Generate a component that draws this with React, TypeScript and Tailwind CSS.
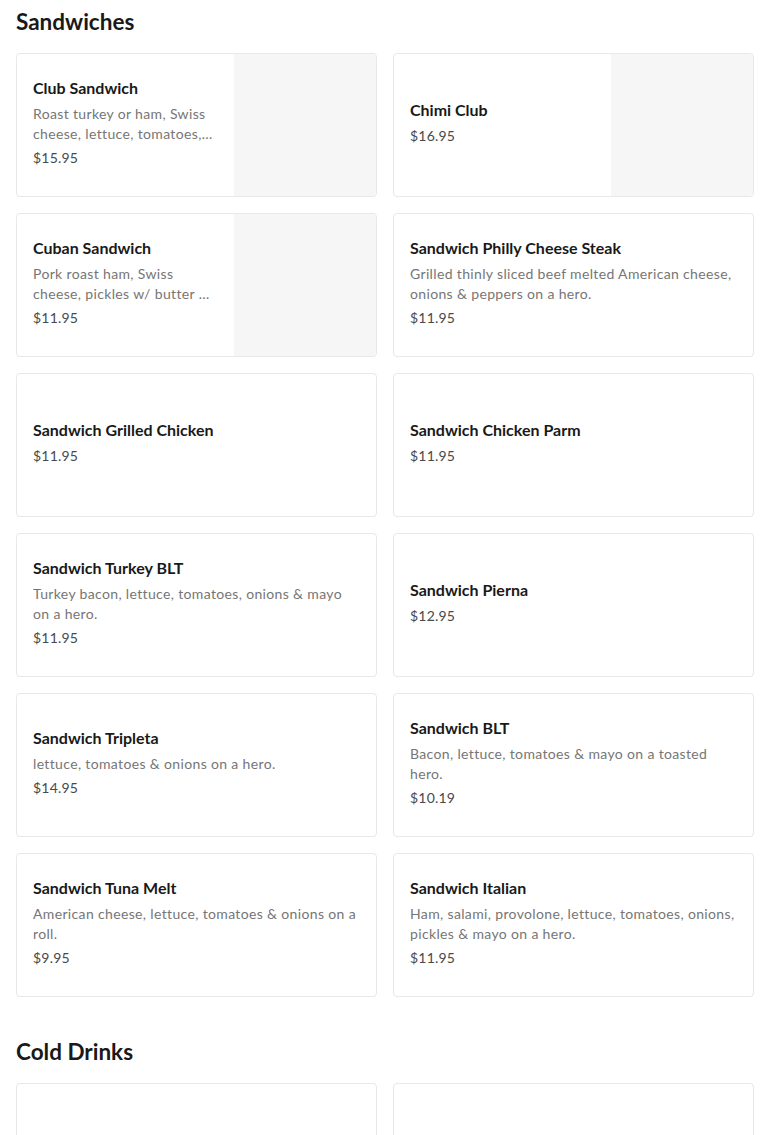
import React from "react";

type Item = { name: string; desc?: string; price: string; image?: boolean };

const sandwiches: Item[] = [
  {
    name: "Club Sandwich",
    desc: "Roast turkey or ham, Swiss cheese, lettuce, tomatoes, bacon & mayo on toasted bread.",
    price: "$15.95",
    image: true,
  },
  { name: "Chimi Club", price: "$16.95", image: true },
  {
    name: "Cuban Sandwich",
    desc: "Pork roast ham, Swiss cheese, pickles w/ butter & mustard on a pressed hero.",
    price: "$11.95",
    image: true,
  },
  {
    name: "Sandwich Philly Cheese Steak",
    desc: "Grilled thinly sliced beef melted American cheese, onions & peppers on a hero.",
    price: "$11.95",
  },
  { name: "Sandwich Grilled Chicken", price: "$11.95" },
  { name: "Sandwich Chicken Parm", price: "$11.95" },
  {
    name: "Sandwich Turkey BLT",
    desc: "Turkey bacon, lettuce, tomatoes, onions & mayo on a hero.",
    price: "$11.95",
  },
  { name: "Sandwich Pierna", price: "$12.95" },
  {
    name: "Sandwich Tripleta",
    desc: "lettuce, tomatoes & onions on a hero.",
    price: "$14.95",
  },
  {
    name: "Sandwich BLT",
    desc: "Bacon, lettuce, tomatoes & mayo on a toasted hero.",
    price: "$10.19",
  },
  {
    name: "Sandwich Tuna Melt",
    desc: "American cheese, lettuce, tomatoes & onions on a roll.",
    price: "$9.95",
  },
  {
    name: "Sandwich Italian",
    desc: "Ham, salami, provolone, lettuce, tomatoes, onions, pickles & mayo on a hero.",
    price: "$11.95",
  },
];

const drinks: Item[] = [
  { name: "Soda", price: "$1.95" },
  { name: "Snapple Juice", price: "$2.95" },
  { name: "Bottled Water", price: "$1.50" },
  { name: "Malta Goya", price: "$2.50" },
];

function Card({ item }: { item: Item }) {
  return (
    <div className="flex h-[144px] overflow-hidden rounded-[4px] border border-[#e8e8e8] bg-white">
      <div className="flex min-w-0 flex-1 flex-col justify-center px-4 pb-[6px]">
        <div className="text-[16px] font-bold leading-[24px] text-[#191919]">{item.name}</div>
        {item.desc && (
          <div className="mt-[4px] line-clamp-2 text-[14px] leading-[20px] tracking-[0.35px] text-[#767676]">
            {item.desc}
          </div>
        )}
        <div className="mt-[4px] text-[14px] leading-[20px] tracking-[0.2px] text-[#494949]">
          {item.price}
        </div>
      </div>
      {item.image && <div className="w-[142px] shrink-0 bg-[#f6f6f6]" />}
    </div>
  );
}

function Section({ title, items }: { title: string; items: Item[] }) {
  return (
    <section>
      <h2 className="mt-2 mb-[17px] text-[22.5px] font-bold leading-[28px] text-[#191919]">{title}</h2>
      <div className="grid grid-cols-2 gap-4">
        {items.map((it) => (
          <Card key={it.name} item={it} />
        ))}
      </div>
    </section>
  );
}

export default function App() {
  return (
    <div
      className="min-h-screen bg-white px-4"
      style={{ fontFamily: "Lato, 'Noto Sans', Arial, sans-serif" }}
    >
      <div className="flex flex-col gap-[33px]">
        <Section title="Sandwiches" items={sandwiches} />
        <Section title="Cold Drinks" items={drinks} />
      </div>
    </div>
  );
}
